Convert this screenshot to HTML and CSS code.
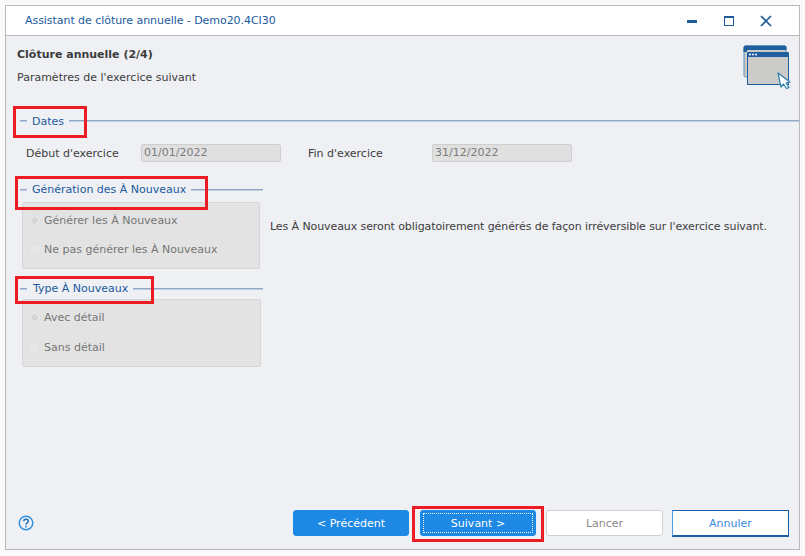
FILE: index.html
```html
<!DOCTYPE html>
<html lang="fr">
<head>
<meta charset="utf-8">
<title>Assistant de clôture annuelle</title>
<link rel="stylesheet" href="styles.css">
</head>
<body>
<div class="window">
  <header class="titlebar">
    <span class="title">Assistant de clôture annuelle - Demo20.4CI30</span>
    <div class="controls">
      <svg class="ctl" width="14" height="14" viewBox="0 0 14 14"><rect x="2" y="6" width="10" height="3" fill="#1f5a9a"/></svg>
      <svg class="ctl" width="14" height="14" viewBox="0 0 14 14"><rect x="2.500" y="2.500" width="9" height="9" fill="none" stroke="#1f5a9a"/><rect x="2" y="2" width="10" height="2" fill="#1f5a9a"/></svg>
      <svg class="ctl" width="14" height="14" viewBox="0 0 14 14"><path d="M2 2 L12 12 M12 2 L2 12" stroke="#1f5a9a" stroke-width="1.700" fill="none"/></svg>
    </div>
  </header>
  <main class="body">
    <div class="head">
      <div>
        <h1 class="h1">Clôture annuelle (2/4)</h1>
        <p class="sub">Paramètres de l'exercice suivant</p>
      </div>
      <svg class="logo" width="50" height="44" viewBox="0 0 50 44">
        <rect x="1" y="1" width="42" height="31" rx="1.500" fill="#c9c9c7" stroke="#5f8fbe"/>
        <path d="M0.500 7 V2.500 a2 2 0 0 1 2-2 H41.500 a2 2 0 0 1 2 2 V5 H4 V7Z" fill="#1f5f9f"/>
        <rect x="4.500" y="8.500" width="41" height="31" fill="#cbcbc9" stroke="#1f5f9f"/>
        <rect x="4" y="7" width="42" height="5" rx="1" fill="#1f5f9f"/>
        <circle cx="7" cy="9.500" r="1" fill="#fff"/><circle cx="10" cy="9.500" r="1" fill="#fff"/><circle cx="13" cy="9.500" r="1" fill="#fff"/>
        <path d="M35 28 L47 37 L43 38 L46 42.500 L43.500 43.500 L40.500 39 L38 42Z" fill="#fff" stroke="#2a7fa8" stroke-width="1.200" stroke-linejoin="round"/>
      </svg>
    </div>

    <div class="legend legend-full">
      <i class="rule short"></i>
      <span class="legend-text">Dates</span>
      <i class="rule long"></i>
      <b class="mark mark-dates"></b>
    </div>
    <div class="dates">
      <span class="lbl lbl-start">Début d'exercice</span>
      <span class="input">01/01/2022</span>
      <span class="lbl lbl-end">Fin d'exercice</span>
      <span class="input">31/12/2022</span>
    </div>

    <section class="group-row">
      <div class="group">
        <div class="legend">
          <i class="rule short"></i>
          <span class="legend-text">Génération des À Nouveaux</span>
          <i class="rule long"></i>
          <b class="mark mark-gen"></b>
        </div>
        <div class="box box-a">
          <div class="radio"><i class="dot on"></i>Générer les À Nouveaux</div>
          <div class="radio"><i class="dot"></i>Ne pas générer les À Nouveaux</div>
        </div>
      </div>
      <p class="note">Les À Nouveaux seront obligatoirement générés de façon irréversible sur l'exercice suivant.</p>
    </section>

    <section class="group group-type">
      <div class="legend legend-type">
        <i class="rule short"></i>
        <span class="legend-text">Type À Nouveaux</span>
        <i class="rule long"></i>
        <b class="mark mark-type"></b>
      </div>
      <div class="box box-b">
        <div class="radio"><i class="dot on"></i>Avec détail</div>
        <div class="radio"><i class="dot"></i>Sans détail</div>
      </div>
    </section>

    <footer class="footer">
      <svg class="help" width="16" height="16" viewBox="0 0 16 16">
        <circle cx="8" cy="8" r="6.800" fill="none" stroke="#2f8de4" stroke-width="1.400"/>
        <path d="M5.800 6.200 C5.800 3.600 10.300 3.600 10.300 6.200 C10.300 7.800 8 7.800 8 9.700" fill="none" stroke="#1f6fc0" stroke-width="1.500"/>
        <rect x="7.200" y="10.800" width="1.600" height="1.600" fill="#1f6fc0"/>
      </svg>
      <div class="buttons">
        <button class="btn primary">&lt; Précédent</button>
        <button class="btn primary focus">Suivant &gt;<b class="mark mark-next"></b></button>
        <button class="btn disabled">Lancer</button>
        <button class="btn cancel">Annuler</button>
      </div>
    </footer>
  </main>
</div>
</body>
</html>
```
FILE: styles.css
```css
* { box-sizing: border-box; }
html, body { height: 100%; }
body {
  margin: 0;
  padding: 5px 5px 6px;
  background: #fafafa;
  font-family: "DejaVu Sans", "Noto Sans", sans-serif;
  font-size: 11px;
  color: #3c3c3c;
}
.window {
  height: 100%;
  width: 795px;
  display: flex;
  flex-direction: column;
  border: 1px solid #b9b9b9;
}
.titlebar {
  height: 30px;
  flex: none;
  display: flex;
  align-items: center;
  justify-content: space-between;
  padding: 0 19px;
  background: #fff;
  border-bottom: 1px solid #b9b9b9;
  color: #1b5a9e;
}
.title { line-height: 28px; letter-spacing: -0.05px; }
.controls { display: flex; gap: 23px; margin-right: 7px; }
.ctl { display: block; }
.body {
  flex: 1;
  display: flex;
  flex-direction: column;
  background: #eef0f4;
  min-height: 0;
}
.head {
  height: 76px;
  flex: none;
  display: flex;
  justify-content: space-between;
  padding: 10px 6px 0 11px;
}
.h1 { margin: 0; font-size: 11px; font-weight: 700; line-height: 18px; color: #3c3c3c; }
.sub { margin: 5px 0 0; line-height: 18px; }
.logo { display: block; margin-top: -1px; }

.legend {
  position: relative;
  display: flex;
  align-items: center;
  gap: 5px;
  height: 18px;
  padding-left: 14px;
  color: #1b5a9e;
}
.legend-text { line-height: 18px; white-space: nowrap; }
.legend-full .legend-text { margin-top: 2px; }
.legend-type .legend-text { margin-left: 1px; }
.rule { display: block; height: 2px; background: #8ea7c6; border-bottom: 1px solid #c3cfdf; }
.short { width: 7px; flex: none; }
.long { flex: 1; }
.mark { position: absolute; display: block; border: 3px solid #ed1c24; pointer-events: none; }
.mark-dates { left: 7px; top: -6px; width: 74px; height: 32px; }
.mark-gen { left: 9px; top: -5px; width: 193px; height: 34px; }
.mark-type { left: 9px; top: -4px; width: 139px; height: 28px; }
.mark-next { left: -9px; top: -5px; width: 132px; height: 36px; }

.dates { display: flex; align-items: center; height: 18px; margin-top: 14px; padding-left: 20px; }
.lbl { display: block; }
.lbl-start { width: 115px; }
.lbl-end { width: 124px; margin-left: 27px; }
.input {
  width: 140px;
  height: 18px;
  padding-left: 2px;
  line-height: 16px;
  background: #e0e0e0;
  border: 1px solid #cfcfcf;
  border-radius: 2px;
  color: #7b7b7b;
}

.group-row { display: flex; margin-top: 19px; }
.group { width: 257px; flex: none; }
.group-type { margin-top: 11px; }
.box { margin: 3px 0 0 16px; background: #e3e3e3; border: 1px solid #d6d6d6; border-radius: 2px; }
.box-a { width: 238px; height: 67px; padding-top: 3px; }
.box-b { width: 239px; height: 68px; padding-top: 2px; margin-top: 1px; }
.box-b .radio { height: 30px; }
.radio { display: flex; align-items: center; height: 29px; padding-left: 5px; color: #767676; white-space: nowrap; }
.dot { width: 13px; height: 13px; margin-right: 3px; border-radius: 50%; border: 1px solid #dfdfdf; background: #e6e6e6; flex: none; }
.dot.on { background: radial-gradient(circle, #d6d6d6 0 3px, #e6e6e6 3.500px); }
.note { margin: 37px 0 0 7px; line-height: 18px; white-space: nowrap; color: #3c3c3c; letter-spacing: -0.09px; }

.footer { margin-top: auto; height: 39px; flex: none; display: flex; align-items: flex-start; padding-left: 12px; }
.help { display: block; margin-top: 5px; }
.buttons { display: flex; margin-left: 259px; }
.btn {
  position: relative;
  height: 26px;
  padding: 0;
  font: inherit;
  border-radius: 3px;
  border: 1px solid #d0d0d0;
  background: #fff;
}
.primary { background: #1e88e5; border-color: #1e88e5; color: #fff; width: 116px; }
.primary + .primary { margin-left: 11px; width: 116px; }
.focus { outline: 1px dotted #fff; outline-offset: -4px; }
.disabled { margin-left: 10px; width: 117px; color: #8a8a8a; }
.cancel { margin-left: 9px; width: 117px; height: 27px; border: 1px solid #1a5fa8; border-left-color: #4a9be8; border-bottom-width: 2px; border-radius: 0; color: #3d8be0; }
```
